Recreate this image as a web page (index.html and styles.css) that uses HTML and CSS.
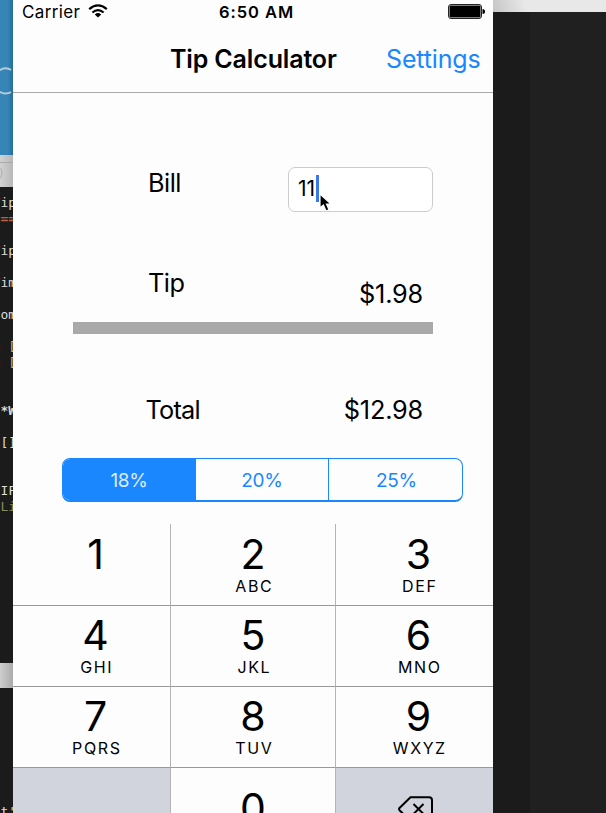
FILE: index.html
```
<!DOCTYPE html>
<html lang="en">
<head>
<meta charset="utf-8">
<title>Tip Calculator</title>
<link rel="stylesheet" href="styles.css">
</head>
<body>
<div class="desktop">
  <div class="left">
    <div class="wallpaper"><svg width="13" height="30" viewBox="0 0 13 30"><path d="M0 4.5C2 1.5 8 1.5 11 4M0 25.5C2 28 8 28 11 26" fill="none" stroke="#b4cbd8" stroke-width="2"/></svg></div>
    <div class="titlebar"><svg width="13" height="32"><path d="M0 7.5H13" stroke="#aaa"/><path d="M-1 13Q2 13 2 18T-1 24" fill="none" stroke="#aaa"/></svg></div>
    <pre class="code"><i>T</i>ip
<b>===</b>

<i>T</i>ip

<i>T</i>im

<i>c</i>om

<i>=</i> <u>[</u>
<i>=</i> <u>[</u>


 <strong>*W</strong>

 []


 IF
 <em>Li</em></pre>
    <div class="divider"></div>
    <pre class="code tail"><i>s</i>t'</pre>
  </div>
  <main class="phone">
    <header class="status">
      <span class="carrier">Carrier</span>
      <svg class="wifi" width="20" height="14" viewBox="0 0 20 14"><g fill="none" stroke="#000" stroke-width="2.2"><path d="M1.2 5.1Q10 -2.5 18.8 5.1"/><path d="M4.4 8.5Q10 3.7 15.6 8.5"/></g><path d="M6.8 10.4Q10 7.8 13.2 10.4L10 13.5Z"/></svg>
      <span class="clock">6:50 AM</span>
      <svg class="battery" width="37" height="15" viewBox="0 0 37 15"><rect x=".5" y=".5" width="33" height="14" rx="2.5" fill="#fff" stroke="#222"/><rect x="1.5" y="1.5" width="31" height="12" rx="1"/><path d="M34.5 5Q37 5 37 7.5T34.5 10Z"/></svg>
    </header>
    <nav class="nav">
      <h1 class="title">Tip Calculator</h1>
      <a class="settings">Settings</a>
    </nav>
    <section class="form">
      <div class="row bill"><span class="label bill-label">Bill</span>
        <div class="field"><span class="value">11</span><span class="caret"></span>
          <svg class="pointer" width="13" height="20" viewBox="0 0 13 20"><path d="M1 1V15L4.4 12L7 18L10 16.7L7.5 11H12Z" stroke="#fff" stroke-width="1.2"/></svg>
        </div>
      </div>
      <div class="row tip"><span class="label tip-label">Tip</span><span class="amount tip-amount">$1.98</span></div>
      <div class="bar"></div>
      <div class="row total"><span class="label total-label">Total</span><span class="amount total-amount">$12.98</span></div>
    </section>
    <div class="segments"><span class="seg on">18%</span><span class="seg">20%</span><span class="seg">25%</span></div>
    <div class="keypad">
      <div class="key"><span class="digit">1</span></div>
      <div class="key"><span class="digit">2</span><span class="letters">ABC</span></div>
      <div class="key"><span class="digit">3</span><span class="letters">DEF</span></div>
      <div class="key"><span class="digit">4</span><span class="letters">GHI</span></div>
      <div class="key"><span class="digit">5</span><span class="letters">JKL</span></div>
      <div class="key"><span class="digit">6</span><span class="letters">MNO</span></div>
      <div class="key"><span class="digit">7</span><span class="letters">PQRS</span></div>
      <div class="key"><span class="digit">8</span><span class="letters">TUV</span></div>
      <div class="key"><span class="digit">9</span><span class="letters">WXYZ</span></div>
      <div class="key gray"></div>
      <div class="key zero"><span class="digit">0</span></div>
      <div class="key gray"><svg class="delete" width="36" height="27" viewBox="0 0 36 27"><path d="M12.5 1.2H31Q34 1.2 34 4.2V22Q34 25 31 25H12.5L1.5 14.2Q.6 13.1 1.5 12Z" fill="none" stroke="#000" stroke-width="2"/><path d="M15.5 8L25.5 18M25.5 8L15.5 18" stroke="#000" stroke-width="2"/></svg></div>
    </div>
  </main>
  <div class="right"><div class="right-top"></div><div class="right-body"><div class="shade"></div></div></div>
</div>
</body>
</html>
```
FILE: styles.css
```
* { box-sizing: border-box; }
html, body { margin: 0; overflow: hidden; }
body { font-family: Inter, "Liberation Sans", sans-serif; color: #000; }
svg { display: block; }
.desktop { display: grid; grid-template-columns: 13px 480px 113px; width: 606px; height: 813px; overflow: hidden; background: #1b1b1b; }

.left { overflow: hidden; height: 813px; background: #1b1b1b; }
.wallpaper { height: 155px; padding-top: 66px; background: linear-gradient(90deg, #3585b7 60%, #286c98); }
.titlebar { height: 32px; background: linear-gradient(90deg, #d2d2d2, #b8b8b8); }
.code { margin: 0 0 0 -7.4px; height: 476px; padding-top: 8px; font: 13px/16px "DejaVu Sans Mono", monospace; color: #dcdcd8; }
.code i { font-style: normal; color: #a34d2c; }
.code b { font-weight: 700; color: #bd6040; }
.code u { text-decoration: none; color: #bdbb83; }
.code em { font-style: normal; color: #85895a; }
.divider { height: 25px; background: linear-gradient(90deg, #cfcfcf, #aaa); }
.tail { height: 125px; padding-top: 116px; }

.phone { height: 813px; overflow: hidden; background: #fdfdfd; }
.status { display: grid; grid-template-columns: 66px 120px 104px 1fr; height: 24px; padding-left: 9px; line-height: 24px; font-size: 17px; align-items: start; }
.carrier { letter-spacing: .35px; }
.wifi { margin-top: 4px; }
.clock { margin-left: 11px; font-weight: 600; white-space: nowrap; font-size: 16.5px; letter-spacing: .95px; }
.battery { margin: 4px 0 0 136px; }
.nav { display: grid; grid-template-columns: 373px 1fr; height: 69px; padding-top: 19px; border-bottom: 1px solid #aaa; line-height: 32px; white-space: nowrap; }
.title { margin: 0 0 0 157px; font-size: 25px; font-weight: 600; line-height: 32px; letter-spacing: -.15px; }
.settings { font-size: 25px; letter-spacing: -.15px; color: #1a87ff; }

.form { padding-left: 60px; height: 365px; font-size: 25.3px; line-height: 32px; }
.row { display: grid; grid-template-columns: 215px 145px; }
.bill { padding-top: 74px; height: 174px; }
.label { margin-left: 75px; letter-spacing: -.5px; }
.total-label { margin-left: 72.5px; letter-spacing: -.8px; }
.field { position: relative; display: flex; height: 45px; padding: 7px 0 0 9px; border: 1px solid #ccc; border-radius: 7px; background: #fff; font-size: 21px; line-height: 28px; }
.value { width: 18px; letter-spacing: 0; }
.caret { width: 3px; height: 27px; background: #3b78ee; }
.pointer { position: absolute; left: 30px; top: 25px; }
.tip { height: 55px; }
.tip-amount { padding-top: 11px; }
.amount { padding-right: 10px; text-align: right; letter-spacing: -.2px; }
.bar { width: 360px; height: 12px; background: #a9a9a9; }
.total { padding-top: 60px; }

.segments { display: grid; grid-template-columns: 132px 133px 136px; width: 401px; height: 44px; margin-left: 49px; border: 1.5px solid #1a87ff; border-bottom-width: 2px; border-radius: 8px; overflow: hidden; color: #1a87ff; font-size: 19px; line-height: 43px; letter-spacing: -.3px; text-align: center; }
.seg + .seg { border-left: 1px solid #1a87ff; }
.on { background: #1a87ff; color: #dcecff; }

.keypad { display: grid; grid-template-columns: 158px 165px 157px; grid-template-rows: 82px 81px 81px 81px; margin-top: 22px; }
.key { display: flex; flex-direction: column; align-items: center; padding-top: 9px; border-right: 1px solid #b4b4b4; border-bottom: 1px solid #999; }
.key:nth-child(3n+1) { padding-left: 8px; }
.key:nth-child(3n) { padding-left: 8px; border-right: 0; }
.key:nth-child(n+4) { padding-top: 8px; }
.digit { height: 42px; font-size: 41px; line-height: 42px; }
.letters { height: 22px; font-size: 16px; line-height: 22px; letter-spacing: 1.6px; margin-right: -2.6px; }
.key.zero { padding-top: 19px; }
.key.gray { background: #d1d4dc; }
.delete { margin: 28px 6px 0 0; }
.key.gray { padding-top: 0; }

.right-top { height: 12px; background: linear-gradient(75deg, #c6c6c6, #e8e8e8 30%); }
.right-body { height: 801px; background: #202020; }
.shade { width: 37px; height: 801px; background: #1b1b1b; }
```
